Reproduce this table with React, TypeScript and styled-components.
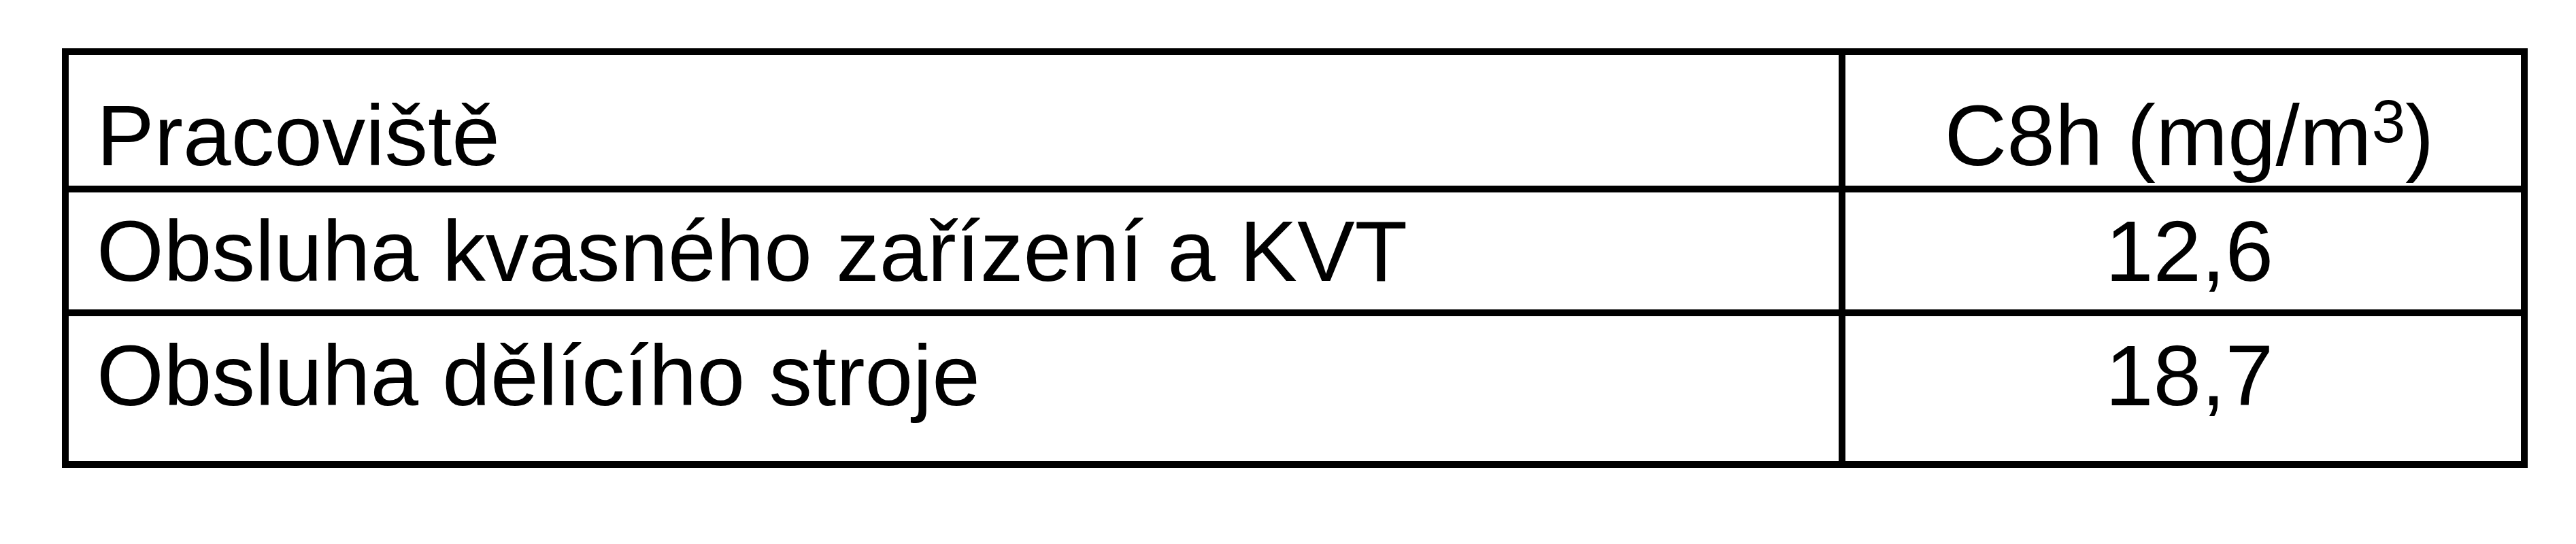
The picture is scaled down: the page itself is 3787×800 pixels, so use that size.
import { Fragment } from "react";
import styled, { createGlobalStyle } from "styled-components";

const GlobalStyle = createGlobalStyle`
  html, body {
    margin: 0;
    padding: 0;
    background: #ffffff;
  }
`;

const Page = styled.div`
  padding: 71px 0 0 91px;
  font-family: "Liberation Sans", Arial, sans-serif;
  color: #000;
`;

const Grid = styled.div`
  display: grid;
  grid-template-columns: 2602px 993px;
  grid-template-rows: 192px 172px 213px;
  gap: 10px;
  padding: 10px;
  width: max-content;
  background: #000;
`;

const Cell = styled.div<{ $center?: boolean; $top: number }>`
  background: #fff;
  font-size: 127px;
  line-height: 1;
  white-space: nowrap;
  padding-top: ${(p) => p.$top}px;
  padding-left: ${(p) => (p.$center ? 18 : 41)}px;
  text-align: ${(p) => (p.$center ? "center" : "left")};
`;

const Sup = styled.span`
  font-size: 0.7em;
  line-height: 0;
  vertical-align: 34px;
`;

const rows = [
  {
    name: "Pracoviště",
    value: (
      <>
        C8h (mg/m<Sup>3</Sup>)
      </>
    ),
    top: 55,
  },
  { name: "Obsluha kvasného zařízení a KVT", value: "12,6", top: 23 },
  { name: "Obsluha dělícího stroje", value: "18,7", top: 24 },
];

export default function App() {
  return (
    <>
      <GlobalStyle />
      <Page>
        <Grid>
          {rows.map((r) => (
            <Fragment key={r.name}>
              <Cell $top={r.top}>{r.name}</Cell>
              <Cell $top={r.top} $center>
                {r.value}
              </Cell>
            </Fragment>
          ))}
        </Grid>
      </Page>
    </>
  );
}
